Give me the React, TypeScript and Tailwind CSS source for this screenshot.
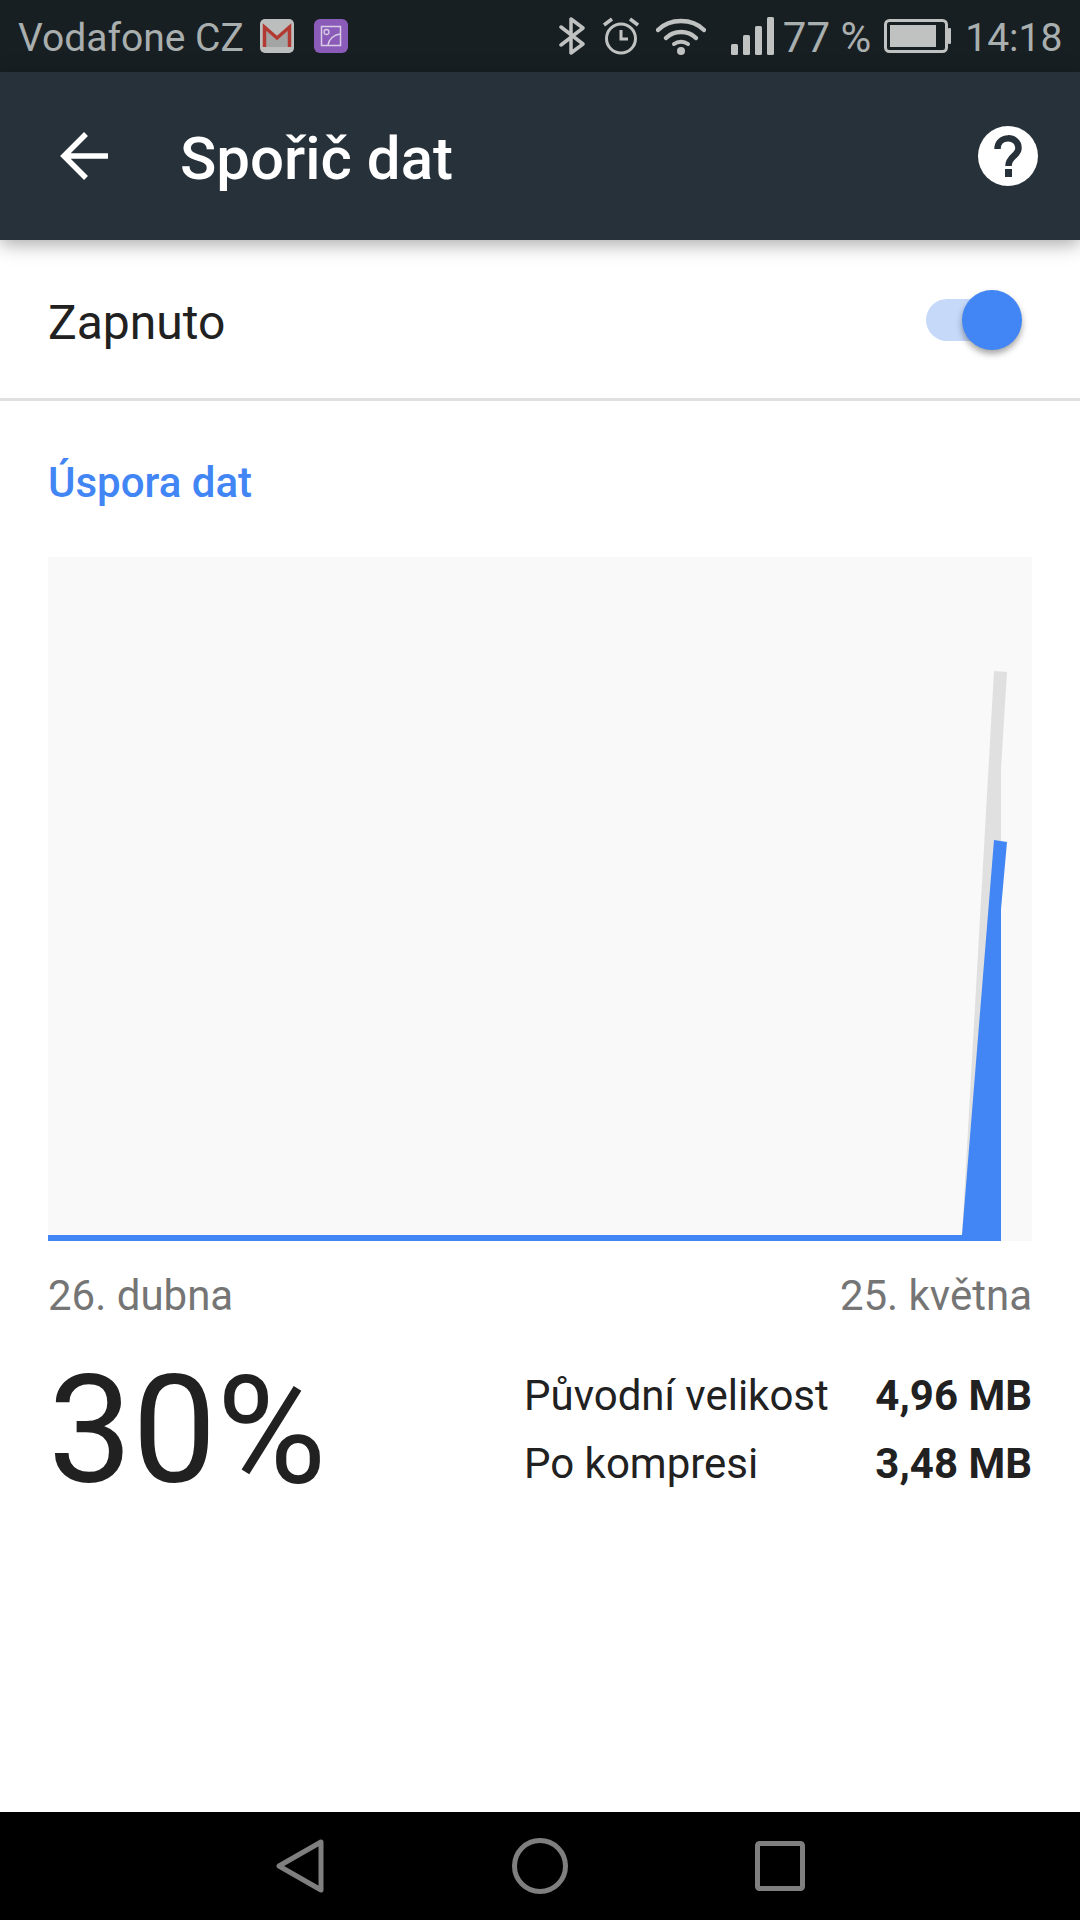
export default function App() {
  return (
    <div className="flex h-[1920px] w-[1080px] flex-col overflow-hidden bg-white font-['Roboto',sans-serif]">
      <div className="flex h-[72px] shrink-0 items-center bg-[#181f22] text-[#a9aeae]">
        <span className="ml-[18px] mt-[4px] text-[39px] leading-none">Vodafone CZ</span>
        <svg className="ml-[16px]" width="34" height="34" viewBox="0 0 34 34">
          <rect width="34" height="34" rx="5" fill="#bcbebd" />
          <path d="M3 9 L17 21 L31 9 V28 H3 Z" fill="#a3a5a4" />
          <path d="M4.5 28 V8 L17 19 L29.500 8 V28" fill="none" stroke="#b23a32" strokeWidth="3.500" />
        </svg>
        <svg className="ml-[20px]" width="34" height="34" viewBox="0 0 34 34">
          <rect width="34" height="34" rx="6" fill="#8a5bb8" />
          <rect x="7.500" y="7.500" width="19" height="19" fill="none" stroke="#d9cde6" strokeWidth="1.500" />
          <circle cx="12.500" cy="13" r="2.500" fill="none" stroke="#d9cde6" strokeWidth="1.300" />
          <path d="M14 26 C15 20 20 16 26 15" fill="none" stroke="#d9cde6" strokeWidth="1.500" />
        </svg>
        <svg className="ml-[211px]" width="27" height="38" viewBox="0 0 27 38">
          <path d="M2 10 L24 27 L12 36 V2 L24 11 L2 28" fill="none" stroke="#bfc2c1" strokeWidth="3.500" strokeLinejoin="round" strokeLinecap="round" />
        </svg>
        <svg className="ml-[17px]" width="36" height="38" viewBox="0 0 36 38">
          <circle cx="18" cy="21.500" r="14.500" fill="none" stroke="#bfc2c1" strokeWidth="3" />
          <path d="M18 13 V22 H25" fill="none" stroke="#bfc2c1" strokeWidth="3" />
          <path d="M1 8 L9 2 M35 8 L27 2" stroke="#bfc2c1" strokeWidth="3.500" />
        </svg>
        <svg className="ml-[17px]" width="50" height="38" viewBox="0 0 50 38">
          <path d="M2 13 C14 1 36 1 48 13" fill="none" stroke="#bfc2c1" strokeWidth="4.500" strokeLinecap="round" />
          <path d="M10 21 C18 13 32 13 40 21" fill="none" stroke="#bfc2c1" strokeWidth="4.500" strokeLinecap="round" />
          <path d="M18 27 C22 24 28 24 32 27" fill="none" stroke="#bfc2c1" strokeWidth="4" strokeLinecap="round" />
          <circle cx="25" cy="34" r="4" fill="#bfc2c1" />
        </svg>
        <svg className="ml-[25px]" width="43" height="38" viewBox="0 0 43 38">
          <rect x="0" y="27" width="7" height="11" rx="1.500" fill="#bfc2c1" />
          <rect x="12" y="18" width="7" height="20" rx="1.500" fill="#bfc2c1" />
          <rect x="24" y="9" width="7" height="29" rx="1.500" fill="#bfc2c1" />
          <rect x="36" y="0" width="7" height="38" rx="1.500" fill="#bfc2c1" />
        </svg>
        <span className="ml-[9px] mt-[4px] text-[42px] leading-none">77 %</span>
        <svg className="ml-[13px]" width="67" height="34" viewBox="0 0 67 34">
          <rect x="1.500" y="1.500" width="61" height="31" rx="4" fill="none" stroke="#bfc2c1" strokeWidth="3" />
          <rect x="6" y="6" width="46" height="22" fill="#bfc2c1" />
          <rect x="64" y="9" width="3" height="16" rx="1" fill="#bfc2c1" />
        </svg>
        <span className="ml-[14px] mt-[4px] text-[39px] leading-none">14:18</span>
      </div>
      <div className="z-10 flex h-[168px] shrink-0 items-center bg-[#27313a] shadow-[0_4px_18px_rgba(0,0,0,0.35)]">
        <svg className="ml-[60px]" width="48" height="48" viewBox="0 0 48 48">
          <path d="M48 24 H4 M26 2 L4 24 L26 46" fill="none" stroke="#ffffff" strokeWidth="5.500" />
        </svg>
        <span className="ml-[72px] mt-[6px] text-[60px] font-medium leading-none text-white">Spořič dat</span>
        <svg className="ml-auto mr-[42px]" width="60" height="60" viewBox="0 0 60 60">
          <circle cx="30" cy="30" r="30" fill="#ffffff" />
          <path d="M19.500 23 C19.500 9 40.500 9 40.500 22 C40.500 30 30.500 30 30.500 40" fill="none" stroke="#27313a" strokeWidth="6.500" />
          <rect x="27" y="43" width="7" height="8" fill="#27313a" />
        </svg>
      </div>
      <div className="flex h-[161px] shrink-0 items-center border-b-[3px] border-[#e0e0e0] pl-[48px] pr-[58px]">
        <span className="mt-[7px] text-[48px] leading-none text-[#212121]">Zapnuto</span>
        <div className="ml-auto mt-[2px] flex items-center">
          <div className="h-[42px] w-[72px] rounded-full bg-[#c6d9f9]" />
          <div className="ml-[-36px] h-[60px] w-[60px] rounded-full bg-[#4285f4] shadow-[0_4px_6px_rgba(0,0,0,0.35)]" />
        </div>
      </div>
      <div className="flex flex-1 flex-col px-[48px]">
        <div className="mt-[61px] text-[42px] font-medium leading-none text-[#4285f4]">Úspora dat</div>
        <svg className="mt-[53px] block shrink-0" width="984" height="684" viewBox="0 0 984 684">
          <rect width="984" height="684" fill="#f9f9f9" />
          <path d="M914 678 L946 114 L959 115 L953 212 V684 H914 Z" fill="#e0e0e0" />
          <path d="M914 678 L946 283 L959 285 L953 352 V684 H0 V678 Z" fill="#4285f4" />
        </svg>
        <div className="mt-[34px] flex justify-between text-[42px] leading-none text-[#757575]">
          <span>26. dubna</span>
          <span>25. května</span>
        </div>
        <div className="mt-[34px] flex items-start">
          <span className="mt-[5px] text-[150px] leading-none text-[#212121]">30%</span>
          <div className="ml-auto mt-[24px] grid w-[508px] grid-cols-[1fr_auto] gap-y-[26px] text-[42px] leading-[42px] text-[#212121]">
            <span>Původní velikost</span>
            <span className="font-bold">4,96 MB</span>
            <span>Po kompresi</span>
            <span className="font-bold">3,48 MB</span>
          </div>
        </div>
      </div>
      <div className="flex h-[108px] shrink-0 items-center bg-black">
        <svg className="ml-[276px]" width="48" height="56" viewBox="0 0 48 56">
          <path d="M45 4 V52 L3 28 Z" fill="none" stroke="#7f7f7f" strokeWidth="5" strokeLinejoin="round" />
        </svg>
        <svg className="ml-[188px]" width="56" height="56" viewBox="0 0 56 56">
          <circle cx="28" cy="28" r="25.500" fill="none" stroke="#7f7f7f" strokeWidth="5" />
        </svg>
        <svg className="ml-[187px]" width="50" height="50" viewBox="0 0 50 50">
          <rect x="2.500" y="2.500" width="45" height="45" rx="2" fill="none" stroke="#7f7f7f" strokeWidth="5" />
        </svg>
      </div>
    </div>
  );
}
